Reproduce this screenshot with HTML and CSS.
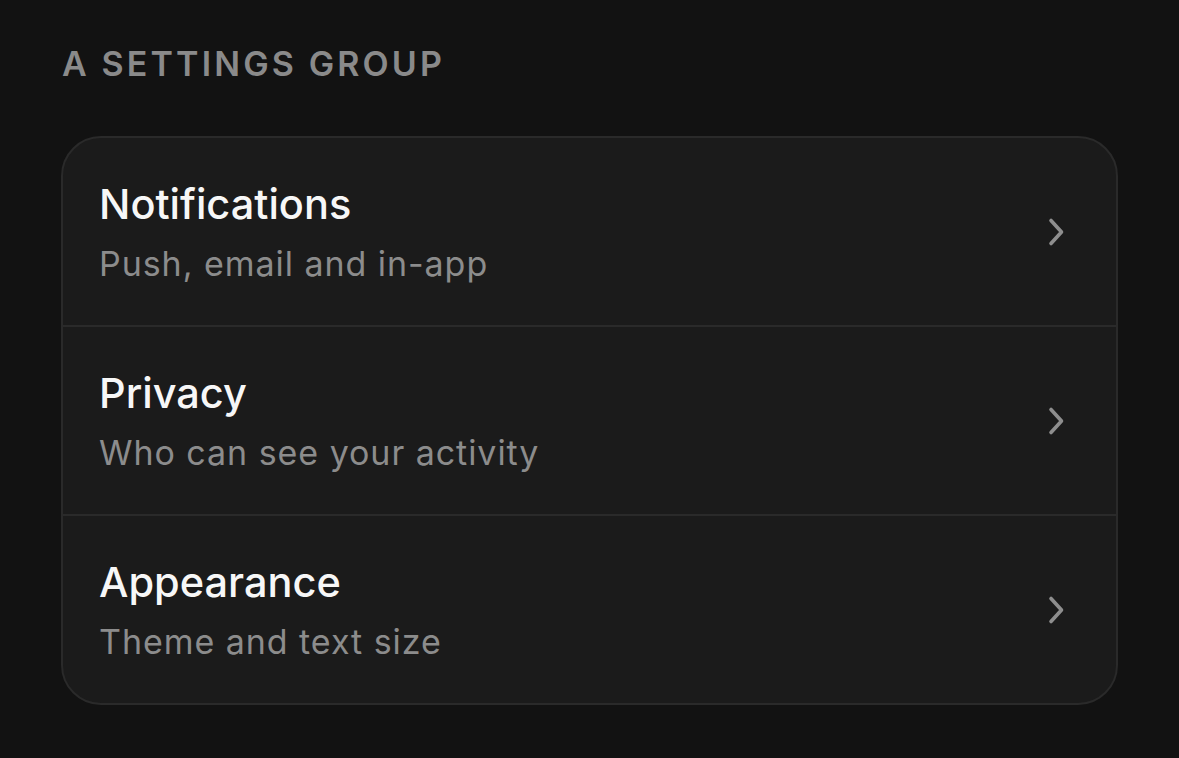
FILE: index.html
```html
<!DOCTYPE html>
<html lang="en">
<head>
<meta charset="utf-8">
<title>Settings</title>
<link rel="stylesheet" href="styles.css">
</head>
<body>
<main class="page">
  <h2 class="group-title">A SETTINGS GROUP</h2>
  <section class="card">
    <a class="row" href="#">
      <div class="row-text">
        <div class="row-title">Notifications</div>
        <div class="row-sub">Push, email and in-app</div>
      </div>
      <svg class="chev" viewBox="0 0 20 30" width="20" height="30" aria-hidden="true"><path d="M4 3.5 L14.5 15 L4 26.5" fill="none" stroke="currentColor" stroke-width="3.6" stroke-linecap="round" stroke-linejoin="round"/></svg>
    </a>
    <a class="row" href="#">
      <div class="row-text">
        <div class="row-title">Privacy</div>
        <div class="row-sub">Who can see your activity</div>
      </div>
      <svg class="chev" viewBox="0 0 20 30" width="20" height="30" aria-hidden="true"><path d="M4 3.5 L14.5 15 L4 26.5" fill="none" stroke="currentColor" stroke-width="3.6" stroke-linecap="round" stroke-linejoin="round"/></svg>
    </a>
    <a class="row" href="#">
      <div class="row-text">
        <div class="row-title">Appearance</div>
        <div class="row-sub">Theme and text size</div>
      </div>
      <svg class="chev" viewBox="0 0 20 30" width="20" height="30" aria-hidden="true"><path d="M4 3.5 L14.5 15 L4 26.5" fill="none" stroke="currentColor" stroke-width="3.6" stroke-linecap="round" stroke-linejoin="round"/></svg>
    </a>
  </section>
</main>
</body>
</html>
```
FILE: styles.css
```css
* { box-sizing: border-box; }
html, body { margin: 0; padding: 0; }
body {
  background: #121212;
  font-family: Inter, "Noto Sans", sans-serif;
  color: #f5f5f5;
  width: 1179px;
  height: 758px;
  overflow: hidden;
}
.page {
  padding: 40px 61px 0 61px;
}
.group-title {
  margin: 0 0 0 1px;
  font-size: 34px;
  font-weight: 600;
  letter-spacing: 0.092em;
  color: #8a8a8a;
  line-height: 48px;
}
.card {
  margin-top: 48px;
  background: #1b1b1b;
  border: 2px solid #2a2a2a;
  border-radius: 40px;
  overflow: hidden;
}
.row {
  display: flex;
  align-items: center;
  justify-content: space-between;
  height: 189px;
  padding: 0 49px 0 36px;
  text-decoration: none;
  color: inherit;
  border-top: 2px solid #2a2a2a;
}
.row:first-child { border-top: none; height: 187px; }
.row-text { display: flex; flex-direction: column; gap: 12px; }
.row-title {
  font-size: 41.5px;
  font-weight: 500;
  color: #f7f7f7;
  line-height: 52px;
}
.row-sub {
  font-size: 34px;
  font-weight: 400;
  color: #8c8c8c;
  line-height: 44px;
  letter-spacing: 0.028em;
}
.chev { color: #8e8e8e; flex: none; }
```
